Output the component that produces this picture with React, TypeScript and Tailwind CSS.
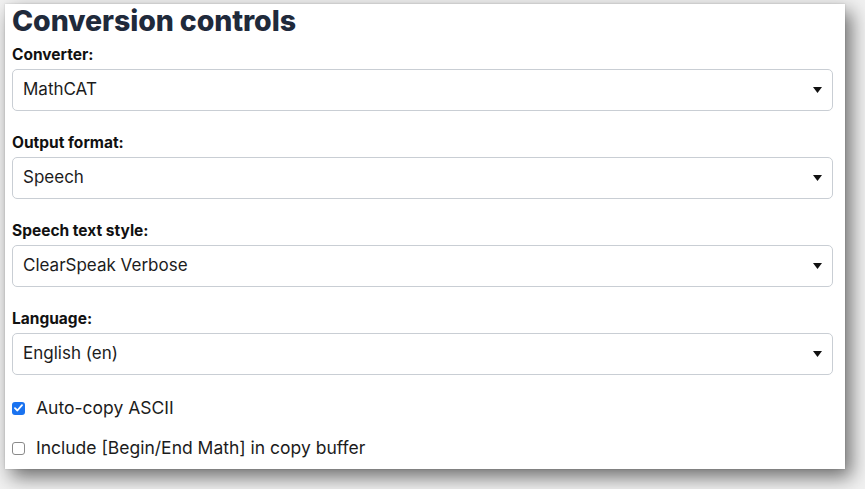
import React from "react";

const font = { fontFamily: "Inter, 'Liberation Sans', sans-serif" };

function Select({ value }: { value: string }) {
  return (
    <div className="flex h-[42px] w-[821px] items-center justify-between rounded-[5px] border border-[#c9ced4] bg-white pl-[10px] pr-[10px] text-[17px] text-[#1c1c1c]">
      <span>{value}</span>
      <svg width="9" height="6" viewBox="0 0 9 6">
        <path d="M0 0 H9 L4.5 6 Z" fill="#111" />
      </svg>
    </div>
  );
}

function Field({ label, value, first }: { label: string; value: string; first?: boolean }) {
  return (
    <div className={first ? "mt-[7px]" : "mt-[22px]"}>
      <div className="h-[20px] text-[15.5px] font-bold leading-[20px] text-[#111]">{label}</div>
      <div className="mt-[4px]">
        <Select value={value} />
      </div>
    </div>
  );
}

export default function App() {
  return (
    <div className="h-[489px] w-[865px] overflow-hidden bg-[#f1f1f1] pl-[5px] pt-[4px]" style={font}>
      <div className="h-[465px] w-[840px] bg-white pl-[7px] shadow-[6px_8px_18px_rgba(0,0,0,0.55),0_0_2px_rgba(0,0,0,0.15)]">
        <h1 className="h-[34px] text-[28.5px] font-extrabold leading-[34px] tracking-[-0.1px] text-[#1f2a3b]">
          Conversion controls
        </h1>
        <Field label="Converter:" value="MathCAT" first />
        <Field label="Output format:" value="Speech" />
        <Field label="Speech text style:" value="ClearSpeak Verbose" />
        <Field label="Language:" value="English (en)" />
        <div className="mt-[21px] flex h-[24px] items-center text-[17.5px] text-[#1c1c1c]">
          <span className="flex h-[13px] w-[13px] items-center justify-center rounded-[3px] bg-[#1a73f0]">
            <svg width="9" height="8" viewBox="0 0 9 8">
              <path d="M1 4.2 L3.4 6.5 L8 1.2" fill="none" stroke="#fff" strokeWidth="1.8" strokeLinecap="round" strokeLinejoin="round" />
            </svg>
          </span>
          <span className="ml-[11px]">Auto-copy ASCII</span>
        </div>
        <div className="mt-[16px] flex h-[24px] items-center text-[17.5px] text-[#1c1c1c]">
          <span className="h-[13px] w-[13px] rounded-[3px] border border-[#8a8a8a] bg-white" />
          <span className="ml-[11px]">Include [Begin/End Math] in copy buffer</span>
        </div>
      </div>
    </div>
  );
}
